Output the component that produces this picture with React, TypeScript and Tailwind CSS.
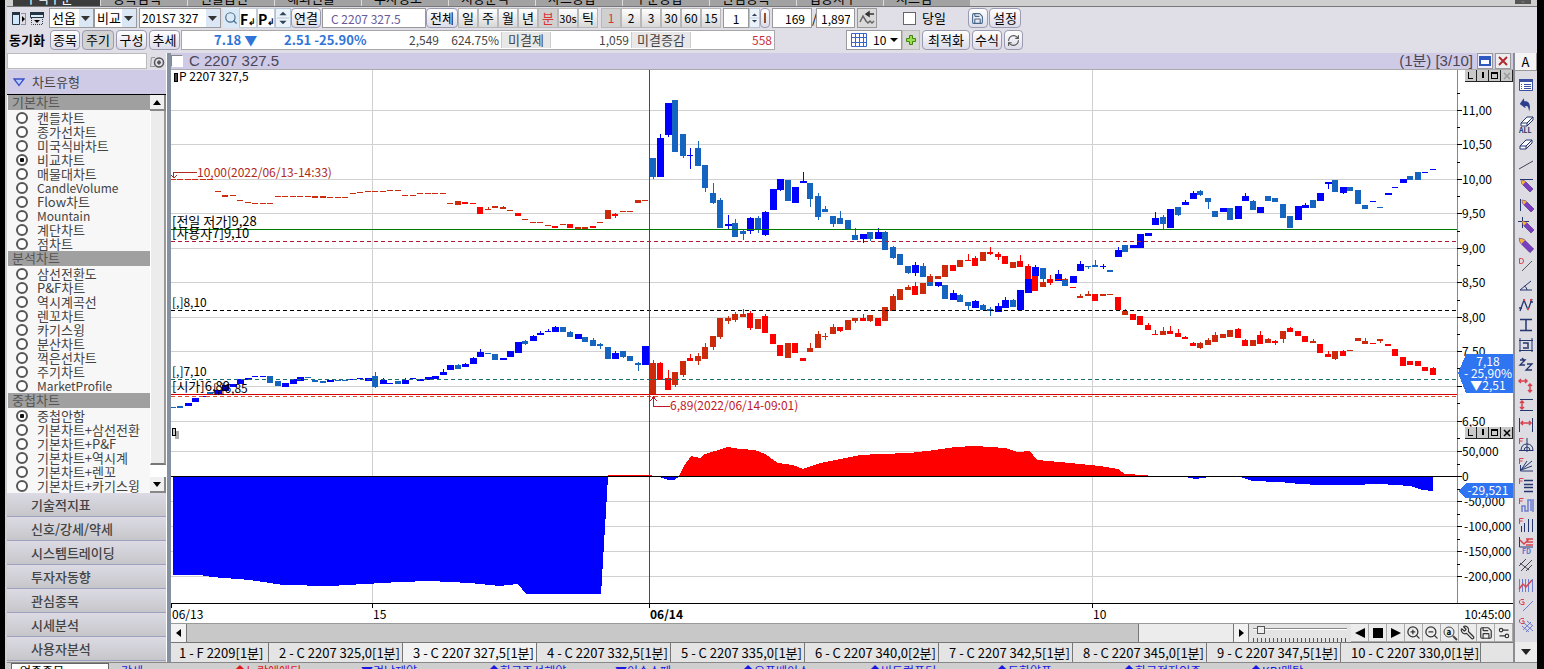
import { ReactNode, useState } from "react";
import { ChevronDown, RefreshCw, Save, Search, Settings2, Wrench, ZoomIn, ZoomOut } from "lucide-react";

type Candle = [top: number, bottom: number, high?: number, low?: number];
type Bar = [kind: string, ...Candle];

const colors: Record<string, string> = {
  B: "#0000ff",
  b: "#1565c0",
  R: "#ff0000",
  r: "#cc2a0a"
};

const FIRST_BAR = -64;

// One entry per minute, oldest first: kind, body top, body bottom, high, low
const callBars: (Bar | null)[] = [
  ["b", 407, 408], ["b", 406, 408], ["B", 403, 406], ["B", 398, 402], ["B", 396, 397], ["b", 392, 394], ["B", 390, 394],
  ["B", 385, 391], ["B", 384, 387], ["B", 379, 384], ["B", 378, 380], ["B", 376, 377], ["B", 376, 377], ["b", 376, 383],
  ["b", 381, 386], ["B", 383, 387], ["B", 379, 384], ["B", 377, 381], ["b", 377, 378], ["b", 380, 382], ["b", 381, 383],
  ["B", 380, 382], ["b", 380, 381], ["b", 380, 381], ["B", 379, 380], ["B", 378, 379], ["B", 378, 381], ["b", 376, 387, 372, 388],
  ["B", 380, 384, 378], ["B", 383, 384], ["b", 381, 384], ["B", 380, 384, 378], ["B", 378, 379], ["B", 379, 381], ["B", 377, 380],
  ["B", 376, 379], ["B", 372, 375, 369], ["B", 365, 370], ["b", 365, 369, 364], ["B", 364, 367, 363], ["B", 358, 364, 357],
  ["B", 352, 357, 349], ["b", 353, 354], ["b", 354, 360], ["B", 358, 360], ["B", 351, 357], ["B", 342, 353], ["b", 341, 344, 340, 345],
  ["B", 336, 341, 335], ["B", 333, 335, 331], ["B", 331, 332, 329], ["B", 327, 332, 326], ["b", 327, 332], ["b", 332, 337, 331],
  ["B", 334, 339], ["b", 337, 342], ["b", 340, 346, 338], ["b", 344, 346, 343, 349], ["b", 347, 359], ["B", 353, 359, 351],
  ["b", 351, 357, 351, 358], ["b", 356, 361], ["b", 363, 365, 362, 371], ["B", 346, 365],
  ["b", 158, 177, 158, 179], ["B", 138, 177, 134], ["B", 103, 135, 103, 137], ["b", 100, 152], ["b", 134, 156, 134, 158],
  ["B", 155, 156, 148, 169], ["b", 148, 166, 141], ["b", 165, 188, 165, 192], ["b", 193, 203, 183, 204], ["b", 200, 228, 198],
  ["B", 224, 226, 215, 229], ["b", 223, 237, 219], ["b", 231, 234, 229, 240], ["B", 218, 231, 217, 234], ["b", 218, 229, 216, 233],
  ["B", 212, 235, 211, 236], ["B", 189, 210], ["B", 179, 190, 179, 191], ["b", 180, 201], ["B", 187, 203], ["B", 181, 183, 172],
  ["b", 183, 199, 183, 207], ["b", 196, 217, 193, 220], ["b", 209, 212, 206], ["b", 216, 224, 216, 227], ["b", 218, 224, 211],
  ["b", 220, 229], ["b", 235, 240, 228], ["B", 234, 239, 234, 243], ["b", 232, 239, 232, 241], ["B", 232, 239, 228],
  ["b", 232, 250, 231], ["b", 247, 258, 246, 259], ["b", 254, 265], ["b", 266, 273, 266, 274], ["B", 265, 273, 262, 276],
  ["b", 266, 277, 263], ["b", 282, 286], ["B", 282, 286, 282, 287], ["b", 285, 299], ["B", 293, 300, 290], ["b", 295, 302, 294],
  ["b", 302, 306, 302, 310], ["B", 301, 308, 300], ["b", 305, 310, 304], ["b", 309, 311, 307, 316], ["B", 306, 312, 303],
  ["B", 300, 308, 297], ["b", 300, 307, 299], ["B", 290, 310], ["B", 279, 293], ["B", 267, 276, 265], ["b", 268, 279, 268, 281],
  null, ["B", 274, 281, 270], ["b", 279, 286], ["B", 276, 283], ["B", 264, 271, 261], ["b", 266, 267, 266, 269], ["b", 265, 267, 260],
  ["B", 266, 267, 264, 269], ["b", 270, 272], ["B", 250, 257, 247], ["b", 245, 252], ["B", 245, 248], ["B", 234, 248], ["B", 233, 236],
  ["B", 218, 225, 212], ["b", 217, 224, 215, 229], ["B", 209, 228], ["b", 207, 215, 207, 216], ["B", 202, 205, 200], ["B", 193, 199, 191],
  ["b", 191, 195, 190, 196], ["b", 198, 202, 198, 209], ["b", 211, 217], ["B", 208, 212], ["b", 208, 220], ["B", 206, 219],
  ["B", 196, 201, 193], ["b", 201, 210, 200], ["B", 207, 213], ["b", 196, 201], ["b", 198, 202], ["b", 204, 218], ["b", 216, 228],
  ["B", 206, 220], ["B", 205, 208, 203], ["b", 200, 208], ["B", 193, 201], ["B", 182, 184, 182, 189], ["b", 180, 192],
  ["B", 187, 193, 187, 194], ["b", 187, 191], ["b", 190, 204], ["b", 205, 209], ["B", 201, 202], ["b", 207, 208], ["B", 193, 195],
  ["B", 187, 188], ["B", 179, 183], ["b", 176, 180], ["b", 172, 180], ["B", 172, 173], ["B", 169, 170]
];

const putBars: (Bar | null)[] = [
  ["r", 179, 180], ["r", 179, 180], ["r", 179, 180], ["r", 179, 180], ["r", 179, 180], ["r", 179, 180], ["r", 191, 192],
  ["r", 195, 197], ["r", 195, 196], ["r", 200, 201], ["r", 202, 203], ["r", 203, 204], ["r", 203, 204], ["r", 203, 204],
  ["r", 196, 197], ["r", 196, 197], ["r", 196, 197], ["r", 196, 197], ["r", 196, 197], ["r", 196, 198], ["r", 196, 198],
  ["r", 197, 198], ["r", 197, 198], ["r", 197, 198], ["r", 193, 194], ["r", 192, 193], ["r", 191, 192], ["r", 191, 192],
  ["r", 191, 192], ["r", 190, 191], ["r", 190, 191], ["r", 195, 196], ["r", 195, 196], ["r", 193, 194], ["r", 193, 194],
  ["r", 193, 194], ["r", 193, 194], ["r", 203, 204], ["r", 201, 205], ["R", 202, 204], ["R", 203, 204], ["R", 207, 214],
  ["r", 209, 210, 207], ["r", 206, 208], ["r", 207, 209, 206], ["r", 210, 211], ["R", 213, 216], ["r", 219, 220], ["r", 222, 223],
  ["r", 222, 223], ["r", 225, 226], ["R", 226, 228], ["r", 224, 225], ["R", 224, 228], ["r", 227, 229], ["r", 227, 230],
  ["R", 226, 228], ["r", 222, 223], ["r", 210, 219], ["R", 214, 216, 213, 218], ["r", 211, 212], ["r", 211, 212], ["r", 200, 203],
  ["r", 200, 201],
  ["r", 363, 394, 360], ["R", 363, 380, 362], ["R", 378, 390, 370], ["r", 372, 385, 372, 387], ["r", 361, 375, 361, 377],
  ["R", 358, 361, 354], ["r", 356, 361, 353, 365], ["r", 347, 359, 343], ["r", 336, 347, 336, 350], ["r", 318, 337, 318, 339],
  ["r", 318, 321, 316, 324], ["r", 314, 320, 312, 322], ["r", 314, 317, 309], ["R", 313, 328, 311, 330], ["r", 319, 329],
  ["R", 316, 333, 314], ["R", 334, 344], ["R", 345, 356], ["r", 343, 358], ["R", 343, 353], ["R", 358, 361], ["r", 348, 352, 343],
  ["r", 334, 348, 331], ["r", 336, 337, 333, 340], ["r", 327, 334, 324], ["R", 327, 331, 327, 332], ["r", 320, 330],
  ["r", 318, 321, 318, 323], ["R", 318, 321, 314], ["r", 315, 321, 315, 322], ["R", 318, 326], ["r", 307, 321], ["r", 296, 311, 294],
  ["r", 289, 300], ["r", 287, 290, 285], ["R", 286, 295, 282], ["r", 283, 294], ["r", 276, 282, 274], ["r", 276, 279],
  ["r", 265, 277], ["R", 265, 271], ["r", 260, 267], ["R", 260, 261, 254], ["R", 258, 266, 256], ["r", 252, 261],
  ["R", 252, 254, 247, 255], ["R", 254, 257, 252, 260], ["R", 256, 264], ["r", 262, 268], ["R", 261, 267, 255], ["R", 266, 279, 264],
  ["R", 276, 291], ["r", 282, 287, 279], ["R", 279, 283, 275, 285], ["R", 279, 280], ["r", 279, 280, 278], ["R", 287, 288],
  ["r", 296, 298, 294], ["r", 294, 296, 291], ["R", 294, 301], ["r", 294, 296], ["r", 294, 295], ["R", 297, 310],
  ["r", 311, 315, 309], ["R", 314, 320], ["R", 316, 325], ["R", 325, 330, 323], ["R", 334, 335, 330], ["r", 331, 335, 327],
  ["R", 331, 334, 326], ["R", 333, 337, 329], ["R", 337, 339, 336], ["R", 343, 346, 342], ["r", 343, 348, 342, 349],
  ["r", 340, 345, 338], ["r", 335, 342, 332], ["r", 334, 338], ["r", 330, 337], ["R", 329, 338, 328], ["R", 340, 346, 339],
  ["r", 340, 346], ["R", 335, 344, 331], ["r", 339, 343, 338], ["R", 341, 343, 340, 345], ["r", 331, 339, 331, 343],
  ["R", 328, 332, 327], ["R", 331, 336], ["R", 336, 342], ["r", 341, 343, 339], ["R", 344, 353], ["R", 354, 357, 351],
  ["r", 351, 359, 351, 360], ["R", 351, 356, 350], ["r", 350, 351], ["r", 338, 341], ["r", 341, 344, 338], ["R", 343, 344],
  ["r", 339, 341, 339, 343], ["R", 344, 346], ["R", 349, 356], ["R", 357, 366], ["R", 361, 365], ["R", 361, 366], ["R", 367, 371],
  ["R", 368, 375, 367]
];

const chartGroups = [
  {
    title: "기본차트",
    name: "basic",
    selected: "비교차트",
    items: ["캔들차트", "종가선차트", "미국식바차트", "비교차트", "매물대차트", "CandleVolume", "Flow차트", "Mountain", "계단차트", "점차트"]
  },
  {
    title: "분석차트",
    name: "basic",
    selected: "",
    items: ["삼선전환도", "P&F차트", "역시계곡선", "렌꼬차트", "카기스윙", "분산차트", "꺽은선차트", "주기차트", "MarketProfile"]
  },
  {
    title: "중첩차트",
    name: "overlay",
    selected: "중첩안함",
    items: ["중첩안함", "기본차트+삼선전환", "기본차트+P&F", "기본차트+역시계", "기본차트+렌꼬", "기본차트+카기스윙"]
  }
];

const sections = ["기술적지표", "신호/강세/약세", "시스템트레이딩", "투자자동향", "관심종목", "시세분석", "사용자분석"];

const sheets = [
  "1 - F 2209[1분]",
  "2 - C 2207 325,0[1분]",
  "3 - C 2207 327,5[1분]",
  "4 - C 2207 332,5[1분]",
  "5 - C 2207 335,0[1분]",
  "6 - C 2207 340,0[2분]",
  "7 - C 2207 342,5[1분]",
  "8 - C 2207 345,0[1분]",
  "9 - C 2207 347,5[1분]",
  "10 - C 2207 330,0[1분]"
];

const menuTabs = ["주식주문", "종목검색", "선물옵션", "해외선물", "투자정보", "시장분석", "차트종합", "주문종합", "관심종목", "업종지수", "시스템"];

const tickers = ["▼경남제약", "◆한국조선해양", "▼이수스페", "◆오픈베이스", "◆비트컴퓨터", "◆동화약품", "◆한국전자인증", "◆KBI메탈"];

const priceTicks: [number, string][] = [
  [110, "11,00"], [144, "10,50"], [179, "10,00"], [213, "9,50"], [248, "9,00"],
  [282, "8,50"], [317, "8,00"], [351, "7,50"], [386, ""], [421, "6,50"]
];

const volumeTicks: [number, string][] = [
  [451, "50,000"], [476, "0"], [501, "-50,000"], [526, "-100,000"], [551, "-150,000"], [576, "-200,000"]
];

const btn = "flex h-5 shrink-0 items-center justify-center rounded-sm border border-[#9a9ab0] bg-linear-to-b from-white to-[#dcdcea] whitespace-nowrap";
const field = "h-5 shrink-0 border border-[#9a9a9a] bg-white px-1 text-xs outline-none";

function Caret() {
  return (
    <svg viewBox="0 0 14 18" className="h-[18px] w-3.5 shrink-0 bg-[#dbe7f5]" aria-hidden="true">
      <path d="M2 7h9l-4.500 5z" fill="#333" />
    </svg>
  );
}

function Combo({ label, value, className }: { label: string; value: string; className: string }) {
  return (
    <label className={`flex h-5 shrink-0 items-center overflow-hidden border border-[#9a9a9a] bg-white ${className}`}>
      <select aria-label={label} className="min-w-0 flex-1 appearance-none pl-0.5 outline-none">
        <option>{value}</option>
      </select>
      <Caret />
    </label>
  );
}

function Spinner({ className }: { className: string }) {
  return (
    <svg viewBox="0 0 14 20" className={`h-5 shrink-0 border border-[#b4c2d2] bg-[#eaf2fa] ${className}`} aria-hidden="true">
      <path d="M3 7l4-4 4 4zM3 13l4 4 4-4z" fill="#345" />
      <path d="M0 10h14" stroke="#b4c2d2" />
    </svg>
  );
}

function Toolbar() {
  const [period, setPeriod] = useState("분");
  const [minute, setMinute] = useState("1");

  return (
    <div className="flex flex-col gap-0.5 border-t border-[#777] bg-[#e0dfe7] pt-px pb-[3px] text-[13px] leading-4">
      <div className="flex items-center">
        <button aria-label="왼쪽 패널" className="ml-0.5 flex w-5 shrink-0 justify-center">
          <svg viewBox="0 0 16 16" className="size-4">
            <path d="M1.500 2.500h7v12h-7z" fill="#cfe6fb" stroke="#234" />
            <path d="M1 2h8v3H1z" fill="#234" />
            <path d="M10.500 3.500h4v11h-4" fill="none" stroke="#345" strokeDasharray="1 1" />
            <path d="M11 6l3 3-3 3z" />
          </svg>
        </button>
        <button aria-label="위쪽 패널" className="mr-1 flex w-4 shrink-0 justify-center">
          <svg viewBox="0 0 16 16" className="size-4">
            <path d="M1.500 2.500h13v5h-13z" fill="#dcebf8" stroke="#234" />
            <path d="M1 2h14v3H1z" fill="#234" />
            <path d="M2.500 8v6.500h11V8" fill="none" stroke="#345" strokeDasharray="1 1" />
            <path d="M5 10h6l-3 3z" />
          </svg>
        </button>
        <Combo label="시장" value="선옵" className="w-[45px]" />
        <Combo label="모드" value="비교" className="mr-0.5 w-[43px]" />
        <Combo label="종목코드" value="201S7 327" className="mr-0.5 w-[82px] text-xs" />
        <button aria-label="검색" className="flex h-5 w-4 shrink-0 items-center justify-center bg-[#dbe9f6] text-[#48708e]">
          <Search size={14} />
        </button>
        <button className="h-5 w-[18px] shrink-0 border border-[#c2ccd8] bg-white text-sm font-bold">F<span className="text-[9px]">↲</span></button>
        <button className="h-5 w-[18px] shrink-0 border border-[#c2ccd8] bg-white text-sm font-bold">P<span className="text-[9px]">↲</span></button>
        <Spinner className="w-4" />
        <button className={`${btn} mr-px w-[30px] bg-linear-to-b from-[#e6e6e6] to-[#cfcfcf]`}>연결</button>
        <input aria-label="종목명" defaultValue="C 2207 327.5" className={`${field} w-[104px] pl-2 text-[#6a5a9c]`} />
        <button className={`${btn} w-8`}>전체</button>
        {["일", "주", "월", "년", "분", "30s", "틱"].map((unit) => (
          <button
            key={unit}
            onClick={() => setPeriod(unit)}
            className={`flex h-5 w-5 shrink-0 items-center justify-center border border-[#b8b8b8] ${unit === "30s" ? "text-[11px]" : ""} ${period === unit ? "bg-[#d0d0d0] text-[#d33]" : "bg-linear-to-b from-white to-[#d8d8d8]"}`}
          >
            {unit}
          </button>
        ))}
        <span className="w-[3px] shrink-0" />
        {["1", "2", "3", "30", "60", "15"].map((value) => (
          <button
            key={value}
            onClick={() => setMinute(value)}
            className={`h-5 w-5 shrink-0 border border-[#b8b8b8] text-xs ${minute === value ? "bg-[#d0d0d0] text-[#d33]" : "bg-linear-to-b from-white to-[#d8d8d8]"}`}
          >
            {value}
          </button>
        ))}
        <input aria-label="주기 값" defaultValue="1" className={`${field} ml-0.5 w-[26px] text-center`} />
        <Spinner className="w-[11px]" />
        <button className={`${btn} mr-0.5 w-2.5`}>I</button>
        <input aria-label="봉 개수" defaultValue="169" className={`${field} w-10 pr-1.5 text-right`} />
        <span className="w-1 shrink-0 text-center">/</span>
        <input aria-label="전체 봉 개수" defaultValue="1,897" className={`${field} w-[39px] px-0.5`} />
        <button aria-label="차트 이동" className="ml-0.5 mr-[26px] h-5 w-5 shrink-0 border border-[#999] bg-[#dadada]">
          <svg viewBox="0 0 18 18" className="size-[18px]" fill="none" stroke="#333">
            <path d="M2 13l3-6 3 5 2 2 2-2 2 2 2-2" strokeWidth="1.500" stroke="#666" />
            <path d="M8 5h8M8 5l3-2v4z" strokeWidth="1.500" fill="#333" />
          </svg>
        </button>
        <label className="flex shrink-0 items-center gap-1.5">
          <input type="checkbox" className="size-[13px] appearance-none border border-[#666] bg-white checked:bg-[#555]" />
          당일
        </label>
        <button aria-label="저장" className={`${btn} ml-[22px] mr-px w-5 text-[#468]`}><Save size={13} /></button>
        <button className={`${btn} w-8`}>설정</button>
      </div>

      <div className="flex items-center">
        <span className="ml-0.5 mr-px w-10 shrink-0 font-bold whitespace-nowrap">동기화</span>
        <div className="flex shrink-0 gap-0.5">
          <button className={`${btn} w-[30px]`}>종목</button>
          <button className={`${btn} w-8 bg-none bg-[#d2d2d2]`}>주기</button>
          <button className={`${btn} w-[31px]`}>구성</button>
          <button className={`${btn} w-[31px]`}>추세</button>
        </div>
        <div className="ml-px mr-[71px] flex h-5 w-[594px] shrink-0 items-center border border-[#a8a8a8] bg-white text-[#444]">
          <b className="ml-8 w-[70px] shrink-0 text-[#2f74d8]">7.18 ▼</b>
          <b className="w-[88px] shrink-0 whitespace-nowrap text-[#2f74d8]">2.51 -25.90%</b>
          <span className="w-[67px] shrink-0 text-right text-xs">2,549</span>
          <span className="mr-0.5 w-[60px] shrink-0 text-right text-xs">624.75%</span>
          <span className="w-[50px] shrink-0 border-x border-[#ccc] bg-[#e8e8e8] text-center">미결제</span>
          <span className="mr-0.5 w-[78px] shrink-0 text-right text-xs">1,059</span>
          <span className="w-[60px] shrink-0 border-x border-[#ccc] bg-[#e8e8e8] text-center">미결증감</span>
          <span className="flex-1 pr-0.5 text-right text-xs text-[#c8323c]">558</span>
        </div>
        <label className="flex h-5 w-14 shrink-0 items-center border border-[#9a9a9a] bg-white">
          <svg viewBox="0 0 16 14" className="ml-1 h-3.5 w-4 shrink-0" fill="none" stroke="#3a66c8">
            <path d="M.5.500h15v13H.500zM4.500 0v14M8.500 0v14M12.500 0v14M0 4.500h16M0 9.500h16" />
          </svg>
          <select aria-label="분할" className="ml-1.5 w-2.5 flex-1 appearance-none text-xs outline-none">
            <option>10</option>
          </select>
          <svg viewBox="0 0 14 18" className="w-3.5 shrink-0"><path d="M3 7h8l-4 4z" /></svg>
        </label>
        <button aria-label="추가" className="mr-0.5 flex h-5 w-[18px] shrink-0 items-center justify-center border border-[#bbb] bg-[#d8d8d8]">
          <svg viewBox="0 0 12 12" className="size-3"><path d="M4.500 1.500h3v3h3v3h-3v3h-3v-3h-3v-3h3z" fill="#9be04a" stroke="#3d8418" /></svg>
        </button>
        <button className={`${btn} mr-0.5 w-12`}>최적화</button>
        <button className={`${btn} mr-0.5 w-[30px]`}>수식</button>
        <button aria-label="새로고침" className={`${btn} w-[19px] text-[#555]`}><RefreshCw size={13} /></button>
      </div>
    </div>
  );
}

function Sidebar() {
  return (
    <aside className="flex w-[159px] shrink-0 flex-col text-[13px] leading-[14px] text-[#444]">
      <div className="flex h-[17px] bg-[#e0dfe7]">
        <input aria-label="차트 검색" className="h-4 w-[140px] border border-[#bbb] bg-white outline-none" />
        <button aria-label="찾기" className="flex w-5 items-center justify-center">
          <svg viewBox="0 0 16 14" className="h-3.5 w-4" fill="none" stroke="#555">
            <path d="M6 2.500H2.500L1.500 11.500H6" stroke="#999" />
            <circle cx="10" cy="7.500" r="4.500" strokeWidth="1.500" />
            <path d="M8 7.500h4M10 5.500v4" strokeWidth="2" />
          </svg>
        </button>
      </div>
      <button className="flex h-[25px] items-center gap-[7px] border-b border-black bg-[#cfcae6] pl-1.5">
        <svg viewBox="0 0 12 9" className="h-[9px] w-3"><path d="M1 1h10L6 7.500z" fill="#b8ccff" stroke="#3a50c8" strokeWidth="1.300" /></svg>
        차트유형
      </button>
      <div className="flex bg-[#f7f7f7]">
        <div className="min-w-0 flex-1 pl-px">
          {chartGroups.map((group) => (
            <fieldset key={group.title}>
              <legend className="mb-px h-[15px] w-full bg-[#a0a0a0] pl-1 text-[#555]">{group.title}</legend>
              {group.items.map((item) => (
                <label
                  key={item}
                  className={`flex h-3.5 items-center gap-[9px] pl-2 whitespace-nowrap ${/[가-힣]/.test(item) ? "" : "text-xs leading-[14px]"}`}
                >
                  <input
                    type="radio"
                    name={group.name}
                    defaultChecked={item === group.selected}
                    className="size-3 shrink-0 appearance-none rounded-full border-2 border-[#555] bg-white checked:bg-[radial-gradient(#111_35%,#fff_45%)]"
                  />
                  {item}
                </label>
              ))}
            </fieldset>
          ))}
        </div>
        <div className="flex w-4 shrink-0 flex-col bg-[#f4f4f4]">
          <button aria-label="위로" className="flex h-4 items-center justify-center border-r-2 border-b-2 border-[#888] bg-[#f0f0f0]">
            <svg viewBox="0 0 8 5" className="h-[5px] w-2"><path d="M0 5h8L4 0z" /></svg>
          </button>
          <div className="flex-1 border-r-2 border-b-2 border-l border-r-[#999] border-b-[#777] border-l-white bg-[#ececec]" />
          <div className="h-3 bg-white" />
          <button aria-label="아래로" className="flex h-4 items-center justify-center border-r-2 border-b-2 border-[#888] bg-[#f0f0f0]">
            <svg viewBox="0 0 8 5" className="h-[5px] w-2"><path d="M0 0h8L4 5z" /></svg>
          </button>
        </div>
      </div>
      {sections.map((section) => (
        <button key={section} className="h-6 border-b border-[#9fa0bd] bg-linear-to-b from-[#dcdbe5] to-[#c6c6ca] pl-6 text-left font-medium">
          {section}
        </button>
      ))}
    </aside>
  );
}

function Series({ bars }: { bars: (Bar | null)[] }) {
  return (
    <g>
      {bars.map((bar, i) => {
        if (!bar) return null;
        const [kind, top, bottom, high = top, low = bottom] = bar;
        const x = Math.round(652.5 + (i + FIRST_BAR) * 7.5);
        return (
          <g key={i} fill={colors[kind]}>
            <rect x={x - 3} y={top} width={kind === "B" && bottom - top > 1 ? 7 : 6} height={bottom - top} />
            <rect x={x} y={high} width={1} height={low - high} />
          </g>
        );
      })}
    </g>
  );
}

function PaneButtons({ y }: { y: number }) {
  return (
    <g>
      {[0, 1, 2, 3].map((n) => (
        <g key={n} transform={`translate(${1465 + n * 12} ${y})`} fill="none">
          <path d="M0 0h12v12H0z" fill="#c9c9c9" />
          <path d="M0 11.500h11.500V0" stroke="#222" />
          {n === 0 && <path d="M3.500 2v6.500H8" stroke="#000" />}
          {n === 1 && <path d="M5.500 2v6" stroke="#000" strokeWidth="2" />}
          {n === 2 && <path d="M2.500 3h6v5.500h-6zM2 3h7" stroke="#000" strokeWidth="1.500" />}
          {n === 3 && <path d="M3 3l6 6M9 3L3 9" stroke={y < 100 ? "#999" : "#000"} strokeWidth="1.500" shapeRendering="auto" />}
        </g>
      ))}
    </g>
  );
}

function Chart() {
  return (
    <svg
      viewBox="171 70 1342 553"
      className="block w-full bg-white text-xs"
      shapeRendering="crispEdges"
      role="img"
      aria-label="C 2207 327.5 비교차트"
    >
      {priceTicks.map(([y]) => <rect key={y} x={171} y={y} width={1286} height={1} fill="#d0d0d0" />)}
      {volumeTicks.map(([y]) => <rect key={y} x={171} y={y} width={1286} height={1} fill="#d0d0d0" />)}
      <rect x={372} y={70} width={1} height={533} fill="#d0d0d0" />
      <rect x={1092} y={70} width={1} height={533} fill="#d0d0d0" />

      <path
        d="M173 477V575H200L212 577L250 580L283 585L330 586L365 584L400 582L430 581L470 583L500 586L518 584L526 594H601L608 477Z"
        fill="#0000ff"
      />
      <path
        d="M679 476L684 466L691 456L700 458L705 454L715 451L728 447L740 449L755 450L765 454L778 463L793 465L803 469L820 463L840 459L860 455L880 454L910 453L935 450L955 447L975 446L1005 448L1018 452L1030 451L1037 460L1060 462L1080 464L1100 466L1118 469L1125 474L1145 475L1150 476Z"
        fill="#ff0000"
      />
      <path d="M660 477L668 480H674L679 477ZM1185 477L1195 479L1210 477ZM1240 477L1252 481L1280 482L1300 484L1320 485L1350 485L1380 484L1410 486L1422 490L1433 491V477Z" fill="#0000ff" />
      <rect x={608} y={475} width={44} height={1} fill="#ff0000" />

      <Series bars={callBars} />
      <Series bars={putBars} />

      <rect x={171} y={229} width={1286} height={1} fill="#007a00" />
      <g fill="none" strokeDasharray="4 3">
        <path d="M171 241.500H1457" stroke="#b01830" />
        <path d="M171 310.500H1457" stroke="#000" />
        <path d="M171 379.500H1457" stroke="#18706e" />
        <path d="M171 396.500H1457" stroke="#d85030" />
      </g>
      <path d="M171 394.500H1457" stroke="#d80000" />
      <path d="M649.500 70V603" stroke="#c81818" />
      <rect x={171} y={476} width={1286} height={1} fill="#000" />
      <rect x={171} y={603} width={1342} height={1} fill="#000" />
      <rect x={1457} y={70} width={1} height={533} fill="#888" />
      <path d="M171.500 603v5M372.500 603v5M649.500 603v5M1092.500 603v5" stroke="#000" />

      <g>
        {[93, 127, 162, 196, 231, 265, 300, 334, 368, 403, 438, 464, 489, 514, 539, 564].map((y) => (
          <rect key={y} x={1457} y={y} width={3} height={1} />
        ))}
        {[...priceTicks, ...volumeTicks].map(([y, text]) => (
          <g key={y}>
            <rect x={1457} y={y} width={5} height={1} />
            <text x={text.startsWith("-") ? 1464 : 1462} y={y + 5}>{text}</text>
          </g>
        ))}
      </g>

      <g>
        <path d="M174.500 73.500h3v8h-3z" fill="#444" stroke="#000" />
        <text x={179} y={81}>P 2207 327,5</text>
        <path d="M175 431h4v8h-4z" fill="#aaa" />
        <path d="M172.500 428.500h3v7h-3z" fill="#ccc" stroke="#000" />
        <g className="text-[13px]">
          <text x={172} y={226}>[전일 저가]9,28</text>
          <text x={172} y={238}>[사용자7]9,10</text>
        </g>
        <text x={172} y={307}>[,]8,10</text>
        <text x={172} y={376}>[,]7,10</text>
        <text x={172} y={391} className="text-[13px]">[시가]6,89</text>
        <text x={213} y={393}>[,]6,85</text>
      </g>
      <g fill="#b02a1c" stroke="none">
        <text x={197} y={177}>10,00(2022/06/13-14:33)</text>
        <path d="M173.500 178v-5.500H197M171 175l3 3 3-3" fill="none" stroke="#b02a1c" />
      </g>
      <g fill="#c01828">
        <text x={670} y={410}>6,89(2022/06/14-09:01)</text>
        <path d="M653.500 397v9.500H670M650 401l3.500-4 3.500 4" fill="none" stroke="#c01828" />
      </g>
      <text x={172} y={619}>06/13</text>
      <text x={373} y={619}>15</text>
      <text x={650} y={619} className="font-bold">06/14</text>
      <text x={1093} y={619}>10</text>
      <text x={1511} y={619} textAnchor="end">10:45:00</text>

      <g fill="#fff" textAnchor="middle">
        <path d="M1458 373L1466 354H1513V393H1466Z" fill="#2f74f0" />
        <text x={1488} y={366}>7,18</text>
        <text x={1488} y={378}>- 25,90%</text>
        <text x={1488} y={390}>▼2,51</text>
        <path d="M1458 491L1466 483H1513V498H1466Z" fill="#2f74f0" />
        <text x={1488} y={495}>-29,521</text>
      </g>
      <PaneButtons y={70} />
      <PaneButtons y={427} />
    </svg>
  );
}

const navy = "#24366e";
const red = "#d8414f";

const eraser = <path d="M2 9l6-6h6l-6 6zM2 9v3h6V9M8 12l6-6V3" fill="#fff" stroke={navy} />;

function pencil(x: number, y: number) {
  return (
    <g transform={`translate(${x} ${y})`}>
      <path d="M0 0l4 1 8 8-3 3-8-8z" fill="#7a3fc0" stroke="#4a2080" strokeWidth=".6" />
      <path d="M0 0l5 1.500-3.500 3.500z" fill="#f5b63c" />
    </g>
  );
}

function fib(children: ReactNode) {
  return (
    <>
      <path d="M1.500 7V1.500h4M1.500 4h3" stroke={red} />
      {children}
    </>
  );
}

const tools: [string, ReactNode][] = [
  ["목록", <><path d="M1.500 2.500h13v11h-13z" fill="#fff" stroke="#3a4fa0" /><path d="M1 2h14v3H1z" fill="#3a4fa0" /><path d="M3 7.500h1M3 9.500h1M3 11.500h1M6 7.500h7M6 9.500h7M6 11.500h7" stroke="#3a4fa0" /></>],
  ["되돌리기", <path d="M2 6l5-5v3c5 0 6 5 3 11 0-4 0-6-3-6v2z" fill="#2c3f8c" transform="rotate(-10 8 8)" />],
  ["전체 지우기", <><g transform="translate(1 -3)">{eraser}</g><text x="1" y="16" fontSize="7" fontWeight="bold" fill={navy} stroke="none">ALL</text></>],
  ["지우기", eraser],
  ["추세선", <path d="M1 12l14-8" stroke="#445" />],
  ["수평선", <><path d="M2 2.500h13" stroke={navy} />{pencil(3, 3)}</>],
  ["수직선", <><path d="M2.500 2v12" stroke={navy} />{pencil(4, 3)}</>],
  ["십자선", <><path d="M4.500 0v11M0 4.500h11" stroke={navy} />{pencil(4, 4)}</>],
  ["펜", <g transform="scale(1.200)">{pencil(1, 1)}</g>],
  ["D선", <><path d="M1.500 1.500h2q2 0 2 2.500t-2 2.500h-2z" stroke={red} /><path d="M4 14L14 4" stroke="#556" /></>],
  ["각도", <path d="M14 13H2L13 4M6 9q3 1 3 4" stroke={navy} />],
  ["평행선", <><path d="M2 14L6 3M10 13l4-11M6 3l4 10M1 11h3M12 5h3" stroke={navy} strokeWidth="1.300" /><path d="M5 3h2M9 12h2M12 3h2" stroke={red} strokeWidth="2" /></>],
  ["범위", <path d="M2 2.500h12M2 13.500h12M8 3v10" stroke={navy} strokeWidth="1.500" />],
  ["영역", <><path d="M2 1v14M14 1v14M1 3.500h14M1 13.500h14" stroke={navy} /><path d="M5 6h5v4M5 11h6" stroke={navy} strokeWidth="1.500" /></>],
  ["파동", <path d="M2 3h5l-5 5h5M9 7h5l-6 6h6M4 1l3 3" stroke={navy} strokeWidth="1.300" />],
  ["측정", <path d="M1 4h8M3 2L1 4l2 2M7 2l2 2-2 2M12 7v8M10 9l2-2 2 2M10 13l2 2 2-2" stroke={red} strokeWidth="1.500" />],
  ["가격 측정", <><path d="M2 2.500h13M2 13.500h13" stroke={navy} /><path d="M4 4v8M2 6l2-2 2 2M2 10l2 2 2-2" stroke={red} strokeWidth="1.500" /></>],
  ["기간 측정", <><path d="M1.500 1v14M14.500 1v14" stroke={navy} /><path d="M3 6h10M5 4L3 6l2 2M11 4l2 2-2 2" stroke={red} strokeWidth="1.500" /></>],
  ["피보나치 아크", fib(<path d="M9 1v14M3 14q0-7 6-7t6 7M6 14q0-4 3-4t3 4M1 13.500h14" stroke={navy} />)],
  ["피보나치 팬", fib(<path d="M2.500 8v6H15M3 13l11-9M3 13l11-4M3 13l6-9" stroke={navy} />)],
  ["되돌림", fib(<path d="M6 3.500h9M6 7.500h9M6 10.500h9M6 14.500h9" stroke={navy} strokeWidth="1.500" />)],
  ["피보나치 파동", fib(<path d="M4 15v-6h3v5h3V3h3v11M15 2v13" stroke="#6e7cd0" strokeWidth="1.500" />)],
  ["피보나치 시간", fib(<path d="M3.500 9v6M6.500 6v9M10.500 2v13M14.500 2v13" stroke={navy} />)],
  ["FD", <><path d="M1.500 0v10H15" stroke={navy} /><path d="M2 3l4 4 5-5M8 2h7M8 5h7M8 8h7" stroke={red} strokeWidth="1.500" /><text x="4" y="17" fontSize="7" fontWeight="bold" fill="#6070c8" stroke="none">FD</text></>],
  ["채널", <path d="M1 9l7-7M3 14L14 3M8 14l6-6M2 6l9 7" stroke="#445" />],
  ["주기선", <><path d="M1.500 2v13M4.500 2v13M7.500 2v13M10.500 2v13M14.500 2v13" stroke="#6e7cd0" /><path d="M1 12l4-5 3 3 6-7" stroke={red} strokeWidth="1.500" /></>],
  ["갠선", <><path d="M6 2.500H3L1.500 4v2L3 7.500h3V5H4" stroke={red} /><path d="M5 14L15 4" stroke="#6e7cd0" /></>],
  ["갠그리드", <><path d="M6 1.500H3L1.500 3v2L3 6.500h3V4H4" stroke={red} /><path d="M5 13l8-8M8 15l7-7M6 6l9 8M4 9l7 6M9 4l6 5" stroke="#6e7cd0" /></>]
];

function DrawingTools() {
  return (
    <div className="flex w-6 shrink-0 flex-col border-l-2 border-[#8c8c94] bg-[#dddce2]">
      <button className="mb-1 h-[18px] border-r border-b border-[#999] bg-[#f4f4f4] text-[13px] leading-4">A</button>
      {tools.map(([label, icon]) => (
        <button key={label} aria-label={label} className="flex h-5 items-center justify-center">
          <svg viewBox="0 0 16 16" className="size-4 overflow-visible" fill="none">{icon}</svg>
        </button>
      ))}
      <button aria-label="더보기" className="mt-auto flex h-5 items-center justify-center bg-[#ececec]">
        <svg viewBox="0 0 10 6" className="h-1.5 w-2.5"><path d="M0 0h10L5 6z" fill="#222" /></svg>
      </button>
    </div>
  );
}

function ScrollRow() {
  const cell = "flex h-[18px] w-[18px] shrink-0 items-center justify-center border-r border-b border-[#aaa] bg-[#ececec] text-[#333]";
  return (
    <div className="flex h-[19px] items-center border-t border-[#999] bg-[#e4e4e4]">
      <button aria-label="왼쪽" className="flex h-[18px] w-4 shrink-0 items-center justify-center border-r border-[#777] bg-[#f2f2f2]">
        <svg viewBox="0 0 5 8" className="h-2 w-[5px]"><path d="M5 0v8L0 4z" /></svg>
      </button>
      <div className="flex h-[18px] flex-1 bg-[#ececec]">
        <div className="w-[91%] border-r border-[#777] bg-[#c8c8c8]" />
      </div>
      <button aria-label="오른쪽" className="flex h-[18px] w-4 shrink-0 items-center justify-center border-x border-[#777] bg-[#f2f2f2]">
        <svg viewBox="0 0 5 8" className="h-2 w-[5px]"><path d="M0 0v8l5-4z" /></svg>
      </button>
      <label className="mx-1 flex h-[18px] w-[94px] shrink-0 flex-col justify-between">
        <input
          type="range"
          aria-label="봉 간격"
          defaultValue={5}
          className="mt-1 h-0.5 w-full appearance-none border-t border-[#888] bg-white [&::-webkit-slider-thumb]:h-2 [&::-webkit-slider-thumb]:w-2 [&::-webkit-slider-thumb]:appearance-none [&::-webkit-slider-thumb]:border [&::-webkit-slider-thumb]:border-[#555] [&::-webkit-slider-thumb]:bg-[#eee]"
        />
        <span className="h-1 bg-[repeating-linear-gradient(90deg,#555_0_1px,transparent_1px_4px)]" />
      </label>
      <button aria-label="이전" className={cell}><svg viewBox="0 0 10 10" className="size-2.5"><path d="M10 0v10L0 5z" /></svg></button>
      <button aria-label="정지" className={cell}><svg viewBox="0 0 10 10" className="size-2.5"><path d="M0 0h10v10H0z" /></svg></button>
      <button aria-label="다음" className={cell}><svg viewBox="0 0 10 10" className="size-2.5"><path d="M0 0v10l10-5z" /></svg></button>
      <button aria-label="확대" className={cell}><ZoomIn size={15} /></button>
      <button aria-label="축소" className={cell}><ZoomOut size={15} /></button>
      <button aria-label="자동" className={cell}>
        <svg viewBox="0 0 16 16" className="size-4" fill="none" stroke="#444">
          <circle cx="7" cy="7" r="5" />
          <path d="M11 11l4 4" strokeWidth="2" />
          <text x="4.500" y="10" fontSize="8" fontWeight="bold" fill="#000" stroke="none">a</text>
        </svg>
      </button>
      <button aria-label="도구" className={cell}><Wrench size={15} className="-scale-x-100" /></button>
      <button aria-label="저장" className={cell}><Save size={14} /></button>
      <button aria-label="환경설정" className={cell}><Settings2 size={14} /></button>
    </div>
  );
}

export default function App() {
  const [sheet, setSheet] = useState(2);

  return (
    <div className="flex min-h-screen flex-col overflow-hidden border-r-[7px] border-l-[5px] border-black bg-[#cfcfcf] pl-0.5 font-['Noto_Sans_CJK_KR',sans-serif] text-[13px] text-black">
      <nav className="flex h-1.5 overflow-hidden bg-[#cfcfcf] text-[13px] leading-4">
        {menuTabs.map((tab, i) => (
          <a
            key={tab}
            href={`#menu-${i}`}
            className={`flex w-[87px] shrink-0 items-end pl-3 whitespace-nowrap ${i === 0 ? "ml-1.5 bg-[#3c3c3c] text-white" : "border-l border-[#ddd] bg-[#a2a2a2]"}`}
          >
            {tab}
          </a>
        ))}
        <ChevronDown size={16} className="mr-1.5 ml-auto h-1 shrink-0 bg-[#555] text-white" />
      </nav>

      <Toolbar />

      <div className="flex flex-1">
        <Sidebar />
        <div className="w-[5px] shrink-0 border-l border-white bg-[#8590a0]" />
        <main className="flex min-w-0 flex-1 flex-col">
          <header className="flex h-[17px] items-center border-b border-[#aaa] bg-[#cfcae6] pr-0.5 font-['Liberation_Sans','Noto_Sans_CJK_KR',sans-serif] text-[15px] leading-4 text-[#4a4658]">
            <input type="checkbox" aria-label="차트 선택" className="mr-1.5 size-3 appearance-none border border-t-[#888] border-l-[#888] border-r-white border-b-white bg-white" />
            <span>C 2207 327.5</span>
            <span className="mr-1 ml-auto">(1분) [3/10]</span>
            <button aria-label="최대화" className="mr-0.5 flex size-4 items-center justify-center border border-[#999] bg-[#eef]">
              <svg viewBox="0 0 12 10" className="h-2.5 w-3"><path d="M1 1h10v8H1z" fill="#fff" stroke="#2c58c0" strokeWidth="2" /><path d="M1 3h10" stroke="#2c58c0" strokeWidth="2" /></svg>
            </button>
            <button aria-label="닫기" className="flex size-4 items-center justify-center border border-[#999] bg-[#eee]">
              <svg viewBox="0 0 10 10" className="size-2.5"><path d="M1 1l8 8M9 1L1 9" stroke="#b02a30" strokeWidth="2" /></svg>
            </button>
          </header>
          <Chart />
          <ScrollRow />
          <div role="tablist" className="flex h-5 border-t border-[#777] bg-[#e4e4e4] text-[13px] leading-[18px]">
            {sheets.map((name, i) => (
              <button
                key={name}
                role="tab"
                aria-selected={sheet === i}
                onClick={() => setSheet(i)}
                className={`shrink-0 border-r border-[#777] text-left whitespace-nowrap ${i === 0 ? "w-[98px] pl-2" : i === 9 ? "w-[140px] pl-2.5" : "w-[134px] pl-2.5"} ${sheet === i ? "bg-[#f2f2f2]" : "bg-[#e4e4e4]"}`}
              >
                {name}
              </button>
            ))}
          </div>
        </main>
        <DrawingTools />
      </div>

      <footer className="flex h-[7px] items-start overflow-hidden border-t border-[#888] bg-[#cfcfcf] text-xs leading-4 whitespace-nowrap text-[#1818e0]">
        <select aria-label="티커" className="mr-3 ml-1 h-4 w-[98px] shrink-0 appearance-none border border-[#666] bg-white pl-2 leading-3 text-black">
          <option>업종종목</option>
        </select>
        <span className="w-[113px] shrink-0">강세</span>
        <span className="w-[127px] shrink-0 text-[#e01818]">◆노랑에에티</span>
        {tickers.map((name) => (
          <span key={name} className="w-[127px] shrink-0">{name}</span>
        ))}
      </footer>
    </div>
  );
}
